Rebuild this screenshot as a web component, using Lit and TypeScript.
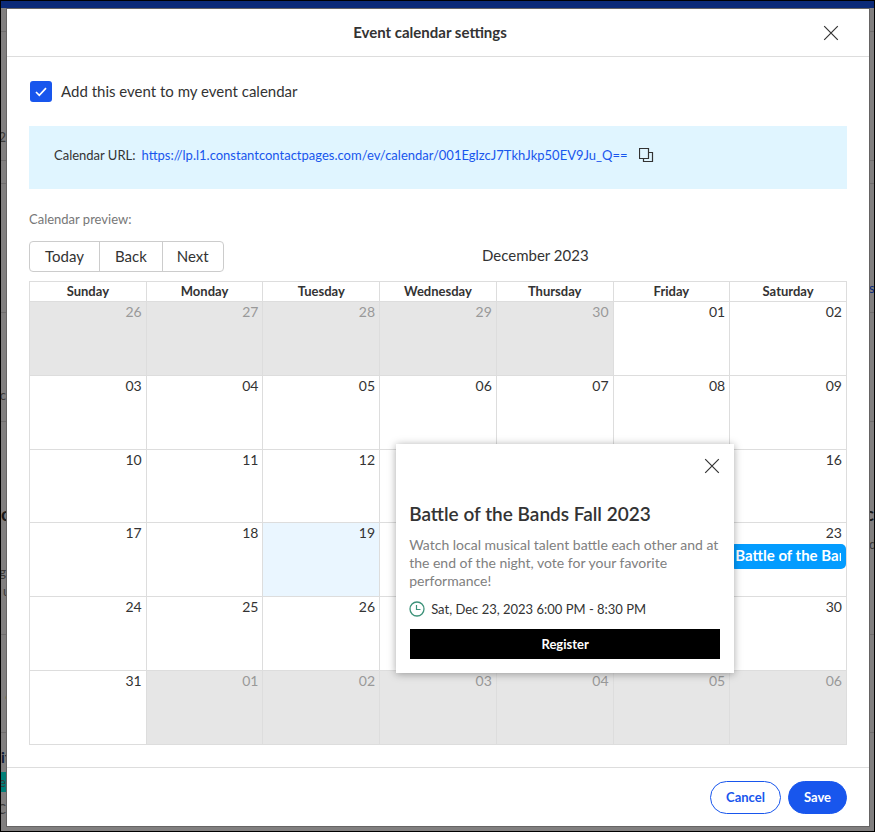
import { LitElement, html, css, nothing, svg } from "lit";
import { customElement } from "lit/decorators.js";
import { classMap } from "lit/directives/class-map.js";

interface Strip {
  h: number;
  line?: boolean;
  text?: string;
  kind?: string;
}

/* The page under the overlay, as it shows past the dialog's two edges. */
const LEFT: Strip[] = [
  { h: 24, line: true },
  { h: 95 },
  { h: 20, text: "2" },
  { h: 14, line: true },
  { h: 23, line: true },
  { h: 129, line: true },
  { h: 72 },
  { h: 20, text: "c" },
  { h: 17, line: true },
  { h: 81 },
  { h: 22, text: "c", kind: "heading" },
  { h: 37 },
  { h: 20, text: "g" },
  { h: 18, text: "u", kind: "cut" },
  { h: 35, line: true },
  { h: 52 },
  { h: 20, text: "•", kind: "dot" },
  { h: 26, line: true },
  { h: 14 },
  { h: 20, text: "it", kind: "title" },
  { h: 5 },
  { h: 20, text: "re", kind: "tag" },
  { h: 7 },
  { h: 20, text: "C" },
];

const RIGHT: Strip[] = [
  { h: 24, line: true },
  { h: 129, line: true },
  { h: 23, line: true },
  { h: 94 },
  { h: 20, text: "s", kind: "link" },
  { h: 15, line: true },
  { h: 109, line: true },
  { h: 81 },
  { h: 22, text: "c", kind: "heading tail" },
  { h: 9 },
  { h: 20, text: "d" },
  { h: 81, line: true },
  { h: 98, line: true },
];

const WEEKDAYS = ["Sunday", "Monday", "Tuesday", "Wednesday", "Thursday", "Friday", "Saturday"];

interface Day {
  label: string;
  off: boolean;
  today: boolean;
  event?: string;
}

const FIRST = new Date(2023, 10, 26);
const WEEKS: Day[][] = Array.from({ length: 6 }, (_, w) =>
  Array.from({ length: 7 }, (_, d) => {
    const date = new Date(FIRST.getFullYear(), FIRST.getMonth(), FIRST.getDate() + w * 7 + d);
    const inMonth = date.getMonth() === 11;
    const n = date.getDate();
    return {
      label: String(n).padStart(2, "0"),
      off: !inMonth,
      today: inMonth && n === 19,
      event: inMonth && n === 23 ? "Battle of the Bands Fall 2023" : undefined,
    };
  })
);

const closeIcon = html`<svg width="16" height="16" viewBox="0 0 16 16" aria-hidden="true">
  ${svg`<path d="M1.2 1.2 14.8 14.8M14.8 1.2 1.2 14.8" fill="none" stroke="#333" stroke-width="1.2" />`}
</svg>`;

const copyIcon = html`<svg width="15" height="15" viewBox="0 0 15 15" aria-hidden="true">
  ${svg`<path d="M.5.5h9v10h-9zM9.5 4.5h4v9h-9v-3" fill="none" stroke="#333" stroke-width="1.2" />`}
</svg>`;

const clockIcon = html`<svg width="16" height="16" viewBox="0 0 16 16" aria-hidden="true">
  ${svg`<circle cx="8" cy="8" r="7" fill="none" stroke="#3d9279" stroke-width="1.3" />
  <path d="M7.5 4v4.5h4" fill="none" stroke="#3d9279" stroke-width="1.2" />`}
</svg>`;

@customElement("event-calendar")
class EventCalendar extends LitElement {
  static styles = css`
    :host {
      display: block;
    }
    button {
      font: inherit;
      color: inherit;
      background: none;
      border: 0;
      padding: 0;
      margin: 0;
      cursor: pointer;
    }
    .toolbar {
      display: flex;
      align-items: flex-start;
      font-size: 15px;
      line-height: 29px;
      margin-bottom: 9px;
    }
    .group {
      display: flex;
      border: 1px solid #ccc;
      border-radius: 4px;
    }
    .group button {
      padding: 0 15px;
    }
    .group button + button {
      border-left: 1px solid #ccc;
    }
    .group button:last-child {
      padding: 0 14px;
    }
    .month {
      flex: 1;
      text-align: center;
    }
    .month h2 {
      font: inherit;
      margin: 0;
    }
    .grid {
      position: relative;
    }
    table {
      width: 100%;
      height: 464px;
      table-layout: fixed;
      border-collapse: collapse;
    }
    th,
    td {
      border: 1px solid #ddd;
      padding: 0;
    }
    th {
      height: 19px;
      font-size: 13px;
      line-height: 18px;
      font-weight: 700;
      vertical-align: top;
    }
    td {
      height: 72px;
      vertical-align: top;
      text-align: right;
      font-size: 14px;
      line-height: 20px;
    }
    .date {
      padding-right: 4px;
    }
    .off {
      background: #e6e6e6;
      color: #999;
    }
    .today {
      background: #eaf6ff;
    }
    .event {
      display: block;
      width: 100%;
      margin-top: 1px;
      padding: 0 5px 3px;
      border-radius: 5px;
      background: #039cff;
      color: #fff;
      font-size: 15px;
      font-weight: 700;
      line-height: 22px;
      text-align: left;
    }
    .event span {
      display: block;
      overflow: hidden;
      white-space: nowrap;
    }
    .popup {
      position: absolute;
      top: 163px;
      right: calc(100% / 7 - 4px);
      width: 338px;
      box-sizing: border-box;
      padding: 14px 13px;
      background: #fff;
      box-shadow: 0 1px 8px rgba(0, 0, 0, 0.35);
    }
    .popup .close {
      display: block;
      height: 16px;
      margin: 0 1px 0 auto;
    }
    .popup h3 {
      margin: 28px 0 10px;
      font-size: 19px;
      line-height: 24px;
      font-weight: 600;
    }
    .about {
      margin: 0 0 10px;
      font-size: 14px;
      line-height: 18px;
      color: #808080;
    }
    .when {
      display: flex;
      align-items: center;
      gap: 6px;
      margin: 0 0 11px;
      font-size: 13px;
      line-height: 18px;
    }
    .action {
      padding: 0 1px;
    }
    .register {
      display: block;
      width: 100%;
      background: #000;
      color: #fff;
      font-size: 13px;
      font-weight: 700;
      line-height: 30px;
    }
  `;

  render() {
    return html`
      <div class="toolbar">
        <div class="group">
          <button type="button">Today</button><button type="button">Back</button
          ><button type="button">Next</button>
        </div>
        <div class="month"><h2>December 2023</h2></div>
      </div>
      <div class="grid">
        <table>
          <thead>
            <tr>
              ${WEEKDAYS.map((d) => html`<th scope="col">${d}</th>`)}
            </tr>
          </thead>
          <tbody>
            ${WEEKS.map(
              (week) => html`<tr>
                ${week.map(
                  (day) => html`<td class=${classMap({ off: day.off, today: day.today })}>
                    <div class="date">${day.label}</div>
                    ${day.event
                      ? html`<button type="button" class="event"><span>${day.event}</span></button>`
                      : nothing}
                  </td>`
                )}
              </tr>`
            )}
          </tbody>
        </table>
        <section class="popup">
          <button type="button" class="close" aria-label="Close">${closeIcon}</button>
          <h3>Battle of the Bands Fall 2023</h3>
          <p class="about">
            Watch local musical talent battle each other and at the end of the night, vote for your
            favorite performance!
          </p>
          <p class="when">${clockIcon}<span>Sat, Dec 23, 2023 6:00 PM - 8:30 PM</span></p>
          <div class="action"><button type="button" class="register">Register</button></div>
        </section>
      </div>
    `;
  }
}

@customElement("app-root")
class AppRoot extends LitElement {
  static styles = css`
    :host {
      display: block;
      font-family: Lato, "Liberation Sans", sans-serif;
      color: #333;
    }
    .page {
      position: relative;
      box-sizing: border-box;
      min-height: 100vh;
      display: flex;
      flex-direction: column;
      padding: 7px 4px 4px 5px;
      border: 1px solid #000;
      background: #817f7f;
    }
    .behind {
      position: absolute;
      inset: 0;
      display: flex;
      flex-wrap: wrap;
      align-content: flex-start;
      justify-content: space-between;
      overflow: hidden;
    }
    .bar {
      flex: 0 0 100%;
      height: 7px;
      background: #0b2a78;
    }
    .strip {
      width: 5px;
    }
    .row {
      box-sizing: border-box;
      display: flex;
      align-items: center;
      justify-content: flex-end;
      overflow: hidden;
      font-size: 13px;
      line-height: 18px;
      color: #3c3a3a;
    }
    .strip + .strip .row {
      justify-content: flex-start;
    }
    .line {
      border-bottom: 1px solid #6f6d6d;
    }
    .heading {
      justify-content: flex-start;
      font-size: 19px;
      font-weight: 700;
      color: #1a1919;
    }
    .strip + .strip .tail {
      justify-content: flex-end;
    }
    .cut {
      justify-content: flex-start;
      padding-left: 2px;
    }
    .dot {
      justify-content: flex-start;
      padding-left: 3px;
      font-size: 19px;
      color: #7a5208;
    }
    .title {
      justify-content: flex-start;
      font-size: 15px;
      font-weight: 700;
      color: #102038;
    }
    .tag {
      background: #007f78;
    }
    .link {
      color: #0c2b7a;
    }
    .dialog {
      position: relative;
      flex: 1;
      display: flex;
      flex-direction: column;
      border: 1px solid #666464;
      background: #fff;
    }
    header {
      display: flex;
      align-items: center;
      height: 47px;
      padding: 0 30px;
      border-bottom: 1px solid #ddd;
    }
    h1 {
      flex: 1;
      margin: 0;
      padding-bottom: 2px;
      font-size: 15px;
      line-height: 20px;
      font-weight: 700;
      text-align: center;
    }
    button {
      font: inherit;
      color: inherit;
      cursor: pointer;
    }
    .icon {
      display: block;
      border: 0;
      padding: 0;
      background: none;
      line-height: 0;
    }
    main {
      flex: 1;
      padding: 24px 22px 22px;
    }
    .check {
      display: flex;
      gap: 9px;
      height: 22px;
      margin: 0 0 23px 1px;
      font-size: 15px;
      line-height: 20px;
    }
    .check .box {
      display: grid;
      height: 21px;
    }
    .check .box > * {
      grid-area: 1 / 1;
      place-self: center;
    }
    .check input {
      appearance: none;
      width: 22px;
      height: 21px;
      margin: 0;
      border-radius: 3px;
      background: #1856ed;
    }
    .check svg {
      z-index: 1;
      pointer-events: none;
    }
    .url {
      display: flex;
      align-items: center;
      padding: 20px 25px 25px;
      background: #e0f5ff;
      font-size: 13px;
      line-height: 18px;
    }
    .url a {
      margin: 0 11px 0 6px;
      color: #1856ed;
      text-decoration: none;
    }
    .preview {
      margin: 20px 0 12px;
      font-size: 13px;
      line-height: 20px;
      color: #777;
    }
    footer {
      display: flex;
      align-items: center;
      justify-content: flex-end;
      gap: 7px;
      height: 58px;
      padding: 0 22px;
      border-top: 1px solid #ddd;
    }
    .pill {
      padding: 0 15px;
      border: 1px solid #1856ed;
      border-radius: 17px;
      background: #fff;
      color: #1856ed;
      font-size: 13px;
      font-weight: 700;
      line-height: 31px;
    }
    .primary {
      background: #1856ed;
      color: #fff;
    }
  `;

  private strip(rows: Strip[]) {
    return html`<div class="strip">
      ${rows.map(
        (r) =>
          html`<div class=${`row ${r.kind ?? ""} ${r.line ? "line" : ""}`} style=${`height:${r.h}px`}>
            ${r.text ?? nothing}
          </div>`
      )}
    </div>`;
  }

  render() {
    return html`
      <div class="page">
        <div class="behind" aria-hidden="true">
          <div class="bar"></div>
          ${this.strip(LEFT)} ${this.strip(RIGHT)}
        </div>
        <div class="dialog" role="dialog" aria-labelledby="title">
          <header>
            <h1 id="title">Event calendar settings</h1>
            <button type="button" class="icon" aria-label="Close">${closeIcon}</button>
          </header>
          <main>
            <label class="check">
              <span class="box">
                <input type="checkbox" checked />
                <svg width="12" height="10" viewBox="0 0 12 10" aria-hidden="true">
                  <path d="M1 5 4.3 8.3 11 1.2" fill="none" stroke="#fff" stroke-width="1.7" />
                </svg>
              </span>
              Add this event to my event calendar
            </label>
            <div class="url">
              <span>Calendar URL:</span>
              <a href="https://lp.l1.constantcontactpages.com/ev/calendar/001EgIzcJ7TkhJkp50EV9Ju_Q=="
                >https://lp.l1.constantcontactpages.com/ev/calendar/001EgIzcJ7TkhJkp50EV9Ju_Q==</a
              >
              <button type="button" class="icon" aria-label="Copy URL">${copyIcon}</button>
            </div>
            <p class="preview">Calendar preview:</p>
            <event-calendar></event-calendar>
          </main>
          <footer>
            <button type="button" class="pill">Cancel</button>
            <button type="button" class="pill primary">Save</button>
          </footer>
        </div>
      </div>
    `;
  }
}
